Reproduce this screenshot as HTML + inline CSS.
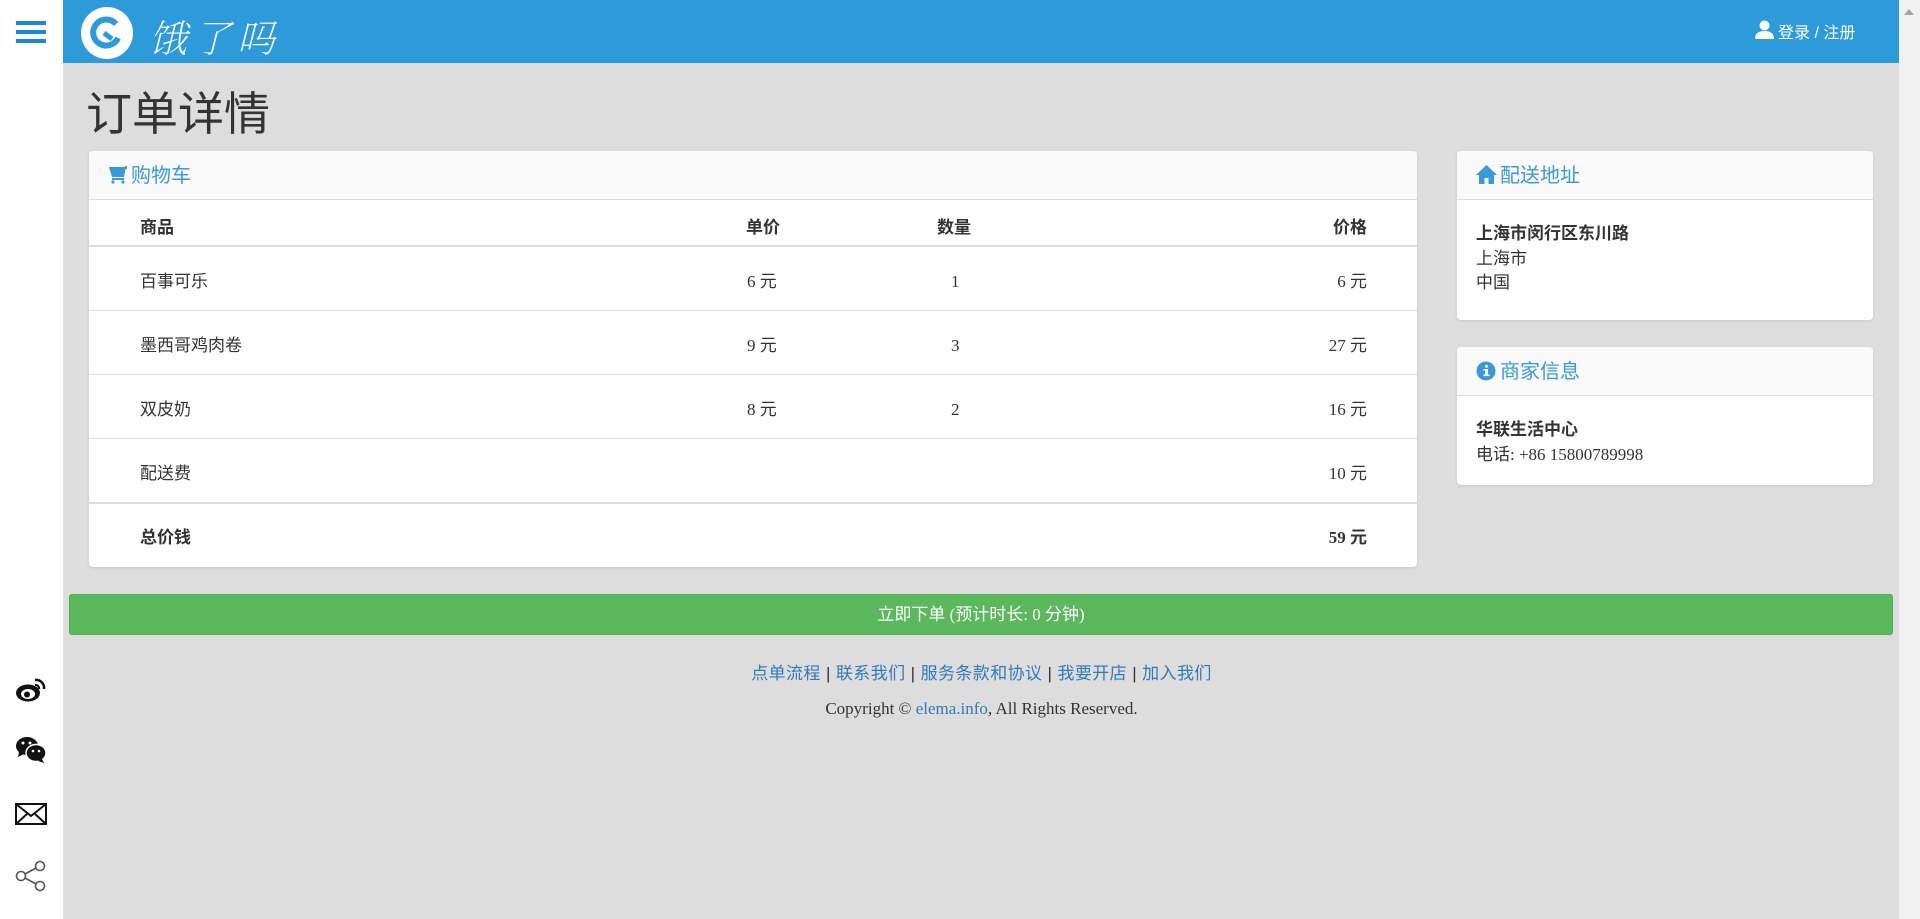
<!DOCTYPE html>
<html><head><meta charset="utf-8"><style>
*{box-sizing:border-box;margin:0;padding:0}
body{width:1920px;height:919px;overflow:hidden;background:#dddddd;font-family:"Liberation Serif","Noto Sans CJK SC",serif;color:#333;position:relative;font-size:17px}
.cjk{font-family:"Liberation Sans","Noto Sans CJK SC",sans-serif}
#side{position:absolute;left:0;top:0;width:63px;height:919px;background:#fff}
#hdr{position:absolute;left:63px;top:0;width:1836px;height:63px;background:#2d9ad9}
#scroll{position:absolute;left:1899px;top:0;width:21px;height:919px;background:#f1f1f1}
.ham{position:absolute;left:16px;width:30px;height:4px;background:#1a8ad6}
.panel{position:absolute;background:#fff;border-radius:4px;box-shadow:0 1px 2px rgba(0,0,0,.1)}
.ph{height:49px;background:#fafafa;border-bottom:1px solid #ddd;border-radius:4px 4px 0 0;color:#3a9ad9;font-size:20px;padding-left:19px;line-height:50px}
.t{position:absolute;white-space:nowrap}
.hl{position:absolute;left:0;right:0;height:1px;background:#ddd}
</style></head><body>
<div id="side">
<div class="ham" style="top:21px"></div><div class="ham" style="top:30px"></div><div class="ham" style="top:39px"></div>
<svg style="position:absolute;left:15px;top:677px" width="32" height="26" viewBox="0 0 32 26"><ellipse cx="13" cy="16" rx="12" ry="8.5" fill="#111"/><ellipse cx="13" cy="17" rx="7" ry="5" fill="#fff"/><circle cx="12" cy="17.5" r="3" fill="#111"/><path d="M20 3a8 8 0 0 1 9 9" stroke="#111" stroke-width="2.5" fill="none"/><path d="M20 8a3.5 3.5 0 0 1 4 4" stroke="#111" stroke-width="2.2" fill="none"/></svg>
<svg style="position:absolute;left:15px;top:736px" width="32" height="28" viewBox="0 0 32 28"><ellipse cx="12" cy="10" rx="11" ry="9" fill="#111"/><path d="M4 16l-1 5 6-3z" fill="#111"/><ellipse cx="21" cy="17" rx="10" ry="8.5" fill="#111" stroke="#fff" stroke-width="1.5"/><path d="M27 23l2 4-6-2z" fill="#111"/><circle cx="8" cy="7" r="1.5" fill="#fff"/><circle cx="15" cy="7" r="1.5" fill="#fff"/><circle cx="18" cy="15" r="1.3" fill="#fff"/><circle cx="24" cy="15" r="1.3" fill="#fff"/></svg>
<svg style="position:absolute;left:15px;top:803px" width="32" height="22" viewBox="0 0 32 22"><rect x="1" y="1" width="30" height="20" fill="none" stroke="#111" stroke-width="2"/><path d="M1 1l15 12L31 1M1 21l11-10M31 21L20 11" fill="none" stroke="#111" stroke-width="2"/></svg>
<svg style="position:absolute;left:15px;top:860px" width="32" height="32" viewBox="0 0 32 32"><circle cx="6" cy="16" r="4.5" fill="none" stroke="#555" stroke-width="1.6"/><circle cx="25" cy="6" r="4.5" fill="none" stroke="#555" stroke-width="1.6"/><circle cx="25" cy="26" r="4.5" fill="none" stroke="#555" stroke-width="1.6"/><path d="M10 14l11-6M10 18l11 6" stroke="#555" stroke-width="1.6"/></svg>
</div>
<div id="hdr">
<svg style="position:absolute;left:17px;top:6px" width="54" height="54" viewBox="0 0 54 54"><circle cx="27" cy="27" r="26" fill="#fff"/><path d="M36 18a13 13 0 1 0 2 14" stroke="#2d9ad9" stroke-width="6" fill="none"/><path d="M24 27l8 6" stroke="#2d9ad9" stroke-width="5"/></svg>
<div class="t" style="left:86px;top:8px;color:#fff;font-size:38px;font-style:italic;font-family:'Noto Serif CJK SC',serif;letter-spacing:6px;font-weight:200">饿了吗</div>
<svg style="position:absolute;left:1692px;top:20px" width="19" height="19" viewBox="0 0 19 19"><circle cx="9.5" cy="5.5" r="5" fill="#fff"/><path d="M0 19c0-6 4-8 9.5-8s9.5 2 9.5 8z" fill="#fff"/></svg>
<div class="t cjk" style="left:1715px;top:19px;color:#fff;font-size:16px">登录 / 注册</div>
</div>
<div id="scroll"><div style="position:absolute;left:5px;top:9px;border:5px solid transparent;border-bottom:6px solid #a3a3a3;border-top:0"></div></div>

<div class="t cjk" style="left:86px;top:82px;font-size:46px;color:#333;line-height:64px">订单详情</div>

<div class="panel" style="left:89px;top:151px;width:1328px;height:416px">
<div class="ph cjk"><svg width="19" height="18" viewBox="0 0 19 18" style="vertical-align:-2px;margin-right:4px"><path d="M1 1h17l-2 10H4z" fill="#3a9ad9"/><path d="M17 0h2v3h-2z" fill="#3a9ad9"/><rect x="4" y="12" width="12" height="2" fill="#3a9ad9"/><circle cx="5" cy="16" r="1.6" fill="#3a9ad9"/><circle cx="15" cy="16" r="1.6" fill="#3a9ad9"/></svg>购物车</div>
<div class="hl" style="top:94px;height:2px"></div>
<div class="hl" style="top:159px"></div><div class="hl" style="top:223px"></div><div class="hl" style="top:287px"></div>
<div class="hl" style="top:351px;height:2px"></div>
<div class="t cjk" style="left:51px;top:62px;font-weight:bold">商品</div>
<div class="t cjk" style="left:657px;top:62px;font-weight:bold">单价</div>
<div class="t cjk" style="left:848px;top:62px;font-weight:bold">数量</div>
<div class="t cjk" style="right:50px;top:62px;font-weight:bold">价格</div>
<div class="t cjk" style="left:51px;top:116px">百事可乐</div><div class="t" style="left:658px;top:116px">6 元</div><div class="t" style="left:862px;top:121px">1</div><div class="t" style="right:50px;top:116px">6 元</div>
<div class="t cjk" style="left:51px;top:180px">墨西哥鸡肉卷</div><div class="t" style="left:658px;top:180px">9 元</div><div class="t" style="left:862px;top:185px">3</div><div class="t" style="right:50px;top:180px">27 元</div>
<div class="t cjk" style="left:51px;top:244px">双皮奶</div><div class="t" style="left:658px;top:244px">8 元</div><div class="t" style="left:862px;top:249px">2</div><div class="t" style="right:50px;top:244px">16 元</div>
<div class="t cjk" style="left:51px;top:308px">配送费</div><div class="t" style="right:50px;top:308px">10 元</div>
<div class="t cjk" style="left:51px;top:372px;font-weight:bold">总价钱</div><div class="t" style="right:50px;top:372px;font-weight:bold">59 元</div>
</div>

<div class="panel" style="left:1457px;top:151px;width:416px;height:169px">
<div class="ph cjk"><svg width="21" height="19" viewBox="0 0 21 19" style="vertical-align:-2px;margin-right:3px"><path d="M10.5 0L0 10h3v9h5.5v-6h4v6H18v-9h3z" fill="#3a9ad9"/></svg>配送地址</div>
<div class="t cjk" style="left:19px;top:68px;font-weight:bold">上海市闵行区东川路</div>
<div class="t cjk" style="left:19px;top:93px">上海市</div>
<div class="t cjk" style="left:19px;top:117px">中国</div>
</div>
<div class="panel" style="left:1457px;top:347px;width:416px;height:138px">
<div class="ph cjk"><svg width="20" height="20" viewBox="0 0 20 20" style="vertical-align:-3px;margin-right:4px"><circle cx="10" cy="10" r="9.5" fill="#3a9ad9"/><rect x="9" y="8" width="3" height="7" fill="#fff"/><rect x="7.5" y="8" width="3" height="1.6" fill="#fff"/><rect x="7.5" y="13.5" width="6" height="1.6" fill="#fff"/><circle cx="10.5" cy="5.3" r="1.5" fill="#fff"/></svg>商家信息</div>
<div class="t cjk" style="left:19px;top:68px;font-weight:bold">华联生活中心</div>
<div class="t" style="left:19px;top:93px"><span class="cjk">电话</span>: +86 15800789998</div>
</div>

<div style="position:absolute;left:69px;top:594px;width:1824px;height:41px;background:#5cb85c;border:1px solid #4cae4c;border-radius:3px;color:#fff;text-align:center;line-height:39px;font-size:17px"><span class="cjk">立即下单</span> (<span class="cjk">预计时长</span>: 0 <span class="cjk">分钟</span>)</div>

<div class="t cjk" style="left:0;width:1963px;text-align:center;top:659px;font-size:17px;color:#337ab7;letter-spacing:0.4px">点单流程 <span style="color:#333">|</span> 联系我们 <span style="color:#333">|</span> 服务条款和协议 <span style="color:#333">|</span> 我要开店 <span style="color:#333">|</span> 加入我们</div>
<div class="t" style="left:0;width:1963px;text-align:center;top:699px;font-size:17px">Copyright © <span style="color:#337ab7">elema.info</span>, All Rights Reserved.</div>
</body></html>
